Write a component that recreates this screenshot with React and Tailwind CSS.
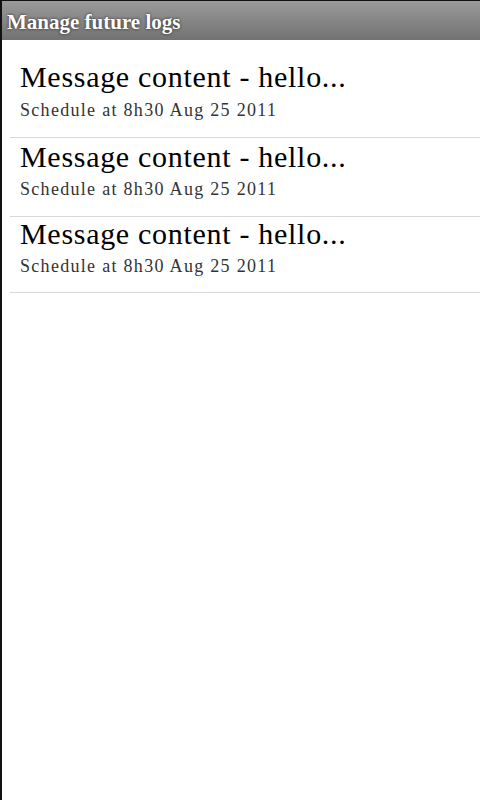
import React from 'react'

const logs = [
  { text: 'Message content - hello...', when: 'Schedule at 8h30 Aug 25 2011', row: 'pt-[20px] pb-[17px]', gap: 'mt-[6px]' },
  { text: 'Message content - hello...', when: 'Schedule at 8h30 Aug 25 2011', row: 'pt-[2px] pb-[17px]', gap: 'mt-[5px]' },
  { text: 'Message content - hello...', when: 'Schedule at 8h30 Aug 25 2011', row: 'pt-0 pb-[16px]', gap: 'mt-[5px]' },
]

export default function App() {
  return (
    <div
      className="h-[800px] w-full border-l-2 border-t border-[#111] bg-white"
      style={{ fontFamily: '"Liberation Serif", "Times New Roman", serif' }}
    >
      {/* Title bar */}
      <div className="h-[39px] bg-gradient-to-b from-[#9a9a9a] to-[#727272] pl-[5px] pt-[9px]">
        <h1 className="text-[21px] font-bold leading-[24px] text-white [text-shadow:0_0_3px_rgba(0,0,0,0.75)]">
          Manage future logs
        </h1>
      </div>

      {/* Future logs list */}
      <ul className="pl-2">
        {logs.map((log, i) => (
          <li key={i} className={`border-b border-[#d9d9d9] pl-[10px] ${log.row}`}>
            <div className="text-[30px] leading-[34px] tracking-[0.7px] text-black">{log.text}</div>
            <div className={`${log.gap} text-[18px] leading-[20px] tracking-[1.3px] text-[#333]`}>{log.when}</div>
          </li>
        ))}
      </ul>
    </div>
  )
}
